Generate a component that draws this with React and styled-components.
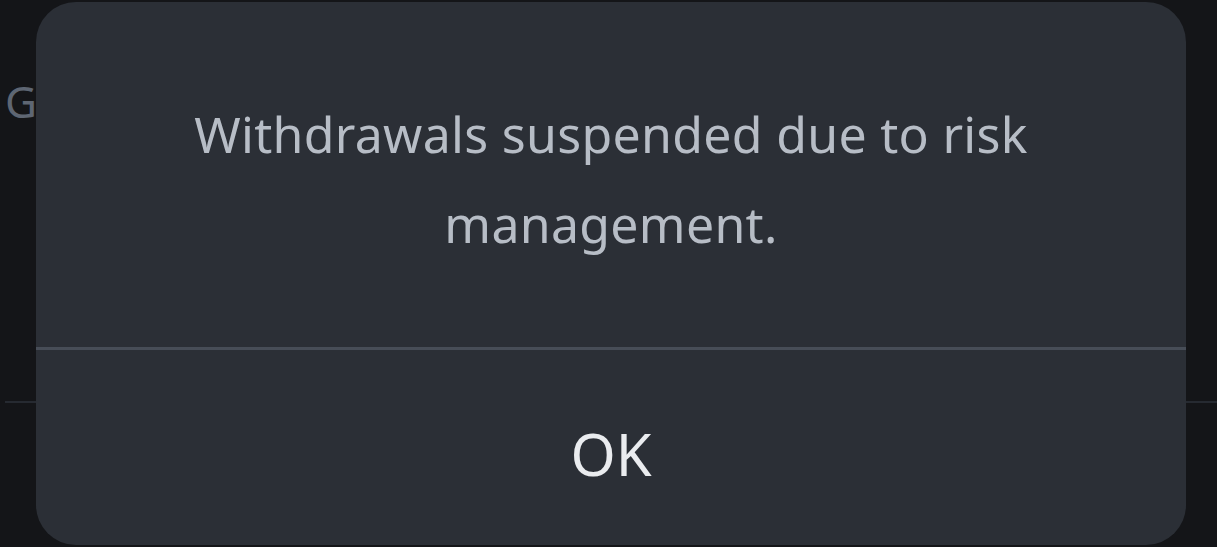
import styled, { createGlobalStyle } from "styled-components";

const GlobalStyle = createGlobalStyle`
  html, body {
    margin: 0;
    padding: 0;
    background: #141518;
  }
  body {
    font-family: "Noto Sans", "Inter", sans-serif;
  }
`;

const Screen = styled.div`
  position: relative;
  width: 1217px;
  height: 547px;
  overflow: hidden;
  background: #141518;
`;

const Backdrop = styled.div`
  display: flex;
  flex-direction: column;
  padding: 77px 0 0 5px;
`;

const Label = styled.div`
  font-size: 44px;
  color: #5e6673;
  line-height: 48px;
`;

const Rule = styled.div`
  margin-top: 276px;
  height: 2px;
  background: #262a31;
`;

const Dialog = styled.div`
  position: absolute;
  left: 36px;
  top: 2px;
  width: 1150px;
  height: 543px;
  border-radius: 40px;
  background: #2b2f36;
  display: flex;
  flex-direction: column;
  overflow: hidden;
`;

const Body = styled.div`
  height: 345px;
  display: flex;
  align-items: flex-start;
  justify-content: center;
  padding: 87px 140px 0;
  box-sizing: border-box;
`;

const Message = styled.p`
  margin: 0;
  text-align: center;
  font-size: 50px;
  letter-spacing: 0.3px;
  line-height: 90px;
  color: #b7bdc6;
`;

const Divider = styled.div`
  height: 3px;
  background: #474d57;
`;

const Action = styled.button`
  flex: 1;
  border: 0;
  background: transparent;
  color: #eaecef;
  font-family: inherit;
  font-size: 58px;
  padding: 12px 0 0;
  cursor: pointer;
`;

export default function App() {
  return (
    <Screen>
      <GlobalStyle />
      <Backdrop>
        <Label>G</Label>
        <Rule />
      </Backdrop>
      <Dialog>
        <Body>
          <Message>Withdrawals suspended due to risk management.</Message>
        </Body>
        <Divider />
        <Action>OK</Action>
      </Dialog>
    </Screen>
  );
}
